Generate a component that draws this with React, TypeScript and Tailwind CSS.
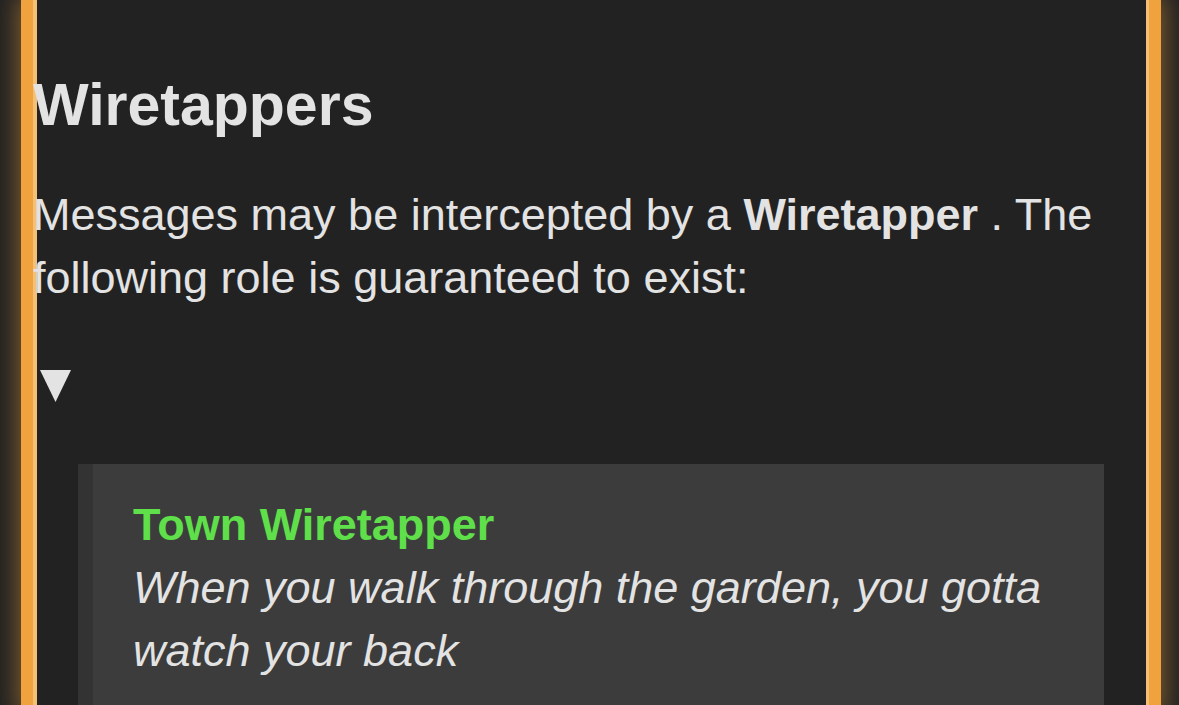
import React from "react";

const font = { fontFamily: '"Liberation Sans", Arial, sans-serif' };

export default function App() {
  return (
    <div className="min-h-[705px] bg-[#222222] overflow-hidden" style={font}>
      <div className="ml-[21px] mr-[18px] min-h-[705px] border-x-[12px] border-[#efa23d] bg-[#222222] text-[#e3e3e3] shadow-[0_0_22px_4px_rgba(239,162,61,0.45),inset_4px_0_0_#f4bf76,inset_-3px_0_0_#f4bf76]">
        <h2 className="pt-[64px] text-[59px] font-bold leading-[82px]">Wiretappers</h2>

        <p className="mt-[37px] text-[45px] leading-[63px]">
          Messages may be intercepted by a <b className="font-bold">Wiretapper</b> . The following
          role is guaranteed to exist:
        </p>

        <div className="mt-[61px] pl-[7px]">
          <svg width="31" height="32" viewBox="0 0 31 32" className="block">
            <polygon points="0,0 31,0 15.5,32" fill="#e3e3e3" />
          </svg>
        </div>

        <div className="mt-[62px] ml-[45px] mr-[45px] border-l-[15px] border-[#333333] bg-[#3c3c3c] pl-[40px] pr-[40px] pt-[29px] pb-[30px]">
          <div className="text-[45px] font-bold leading-[63px] text-[#5fe04a]">Town Wiretapper</div>
          <div className="text-[45px] italic leading-[63px] text-[#e3e3e3]">
            When you walk through the garden, you gotta watch your back
          </div>
        </div>
      </div>
    </div>
  );
}
